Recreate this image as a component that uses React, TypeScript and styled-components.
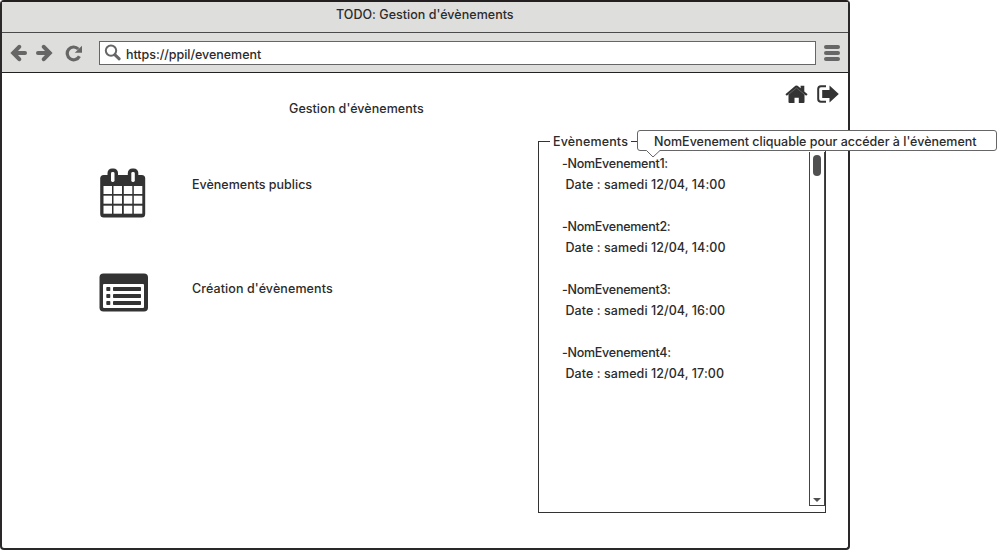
import React from "react";
import styled, { createGlobalStyle } from "styled-components";

const GlobalStyle = createGlobalStyle`
  *, *::before, *::after { box-sizing: border-box; }
  body { margin: 0; background: #fff; overflow: hidden; }
  svg { display: block; flex: none; }
`;

const Screen = styled.div`
  width: 997px;
  height: 550px;
  font: 500 12.5px/21px Inter, "Noto Sans", sans-serif;
  color: #2b2b2b;
`;

const BrowserWindow = styled.div`
  width: 850px;
  height: 550px;
  border: 2px solid #2b2829;
  border-top-color: #231f20;
  border-radius: 4px;
  display: flex;
  flex-direction: column;
`;

const TitleBar = styled.header`
  height: 31px;
  flex: none;
  padding-top: 2px;
  padding-left: 334px;
  background: #dededc;
  border-bottom: 1px solid #4a4a4a;
`;

const Toolbar = styled.div`
  height: 40px;
  flex: none;
  display: flex;
  align-items: center;
  padding: 0 7px 0 8px;
  background: #dededc;
  border-bottom: 1px solid #222;
`;

const NavIcons = styled.div`
  display: grid;
  grid-template-columns: 26px 29px 34px;
`;

const AddressBar = styled.div`
  width: 717px;
  height: 24px;
  display: flex;
  padding: 2px 0 0 4px;
  gap: 4px;
  margin-right: 8px;
  background: #fff;
  border: 1px solid #666;
`;

const Label = styled.span<{ $spacing?: number }>`
  display: block;
  white-space: pre;
  letter-spacing: ${(p) => p.$spacing ?? 0}px;
`;

const Page = styled.main`
  flex: 1;
  display: flex;
  justify-content: space-between;
  padding: 11px 8px 0 97px;
`;

const MainColumn = styled.section`
  padding-top: 14px;
`;

const PageTitle = styled.h1`
  margin: 0 0 49px 190px;
  font: inherit;
`;

const MenuEntry = styled.a`
  display: grid;
  grid-template-columns: 93px auto;
  height: 50px;
  margin-bottom: 54px;
`;

const MenuText = styled.div`
  padding-top: 6px;
`;

const SideColumn = styled.aside`
  width: 303px;
  margin-right: -1px;
`;

const Shortcuts = styled.nav`
  display: flex;
  justify-content: flex-end;
  gap: 9px;
  height: 47px;
  padding: 1px 2px 0 0;
`;

const EventPanel = styled.fieldset`
  position: relative;
  width: 288px;
  height: 382px;
  margin: 0;
  padding: 0;
  min-width: 0;
  border: 1px solid #333;
  display: flex;
  justify-content: space-between;
`;

const PanelTitle = styled.legend`
  margin-left: 11px;
  padding: 0 3px;
  height: 21px;
`;

const EventList = styled.ul`
  list-style: none;
  margin: 0;
  padding: 1px 0 0 23px;
`;

const EventItem = styled.li`
  margin-bottom: 21px;
`;

const EventDate = styled.div`
  padding-left: 3.5px;
`;

const ScrollTrack = styled.div`
  width: 16px;
  height: 354px;
  border: 1px solid #444;
  border-top: 0;
  display: flex;
  flex-direction: column;
  align-items: center;
  justify-content: space-between;
  padding: 3px 0;
`;

const ScrollThumb = styled.div`
  width: 8px;
  height: 21px;
  border-radius: 4px;
  background: #505050;
`;

const Tooltip = styled.div`
  position: absolute;
  left: 98px;
  top: -22px;
  width: 360px;
  height: 21px;
  padding-left: 16px;
  line-height: 21px;
  background: #fff;
  border: 1px solid #666;
  border-radius: 3px;
`;

const TooltipPointer = styled.svg`
  position: absolute;
  left: 8px;
  top: 18px;
`;

const gray = "#666";
const dark = "#333";

const ArrowIcon = ({ flip = false }: { flip?: boolean }) => (
  <svg width="17" height="18" viewBox="0 0 17 18" fill="none" stroke={gray} strokeWidth="4">
    <g transform={flip ? "matrix(-1 0 0 1 17 0)" : undefined}>
      <path d="M9.2 2.8 3.2 9l6 6.2" strokeLinecap="round" strokeLinejoin="miter" />
      <path d="M4 9h11" strokeLinecap="round" />
    </g>
  </svg>
);

const ReloadIcon = () => (
  <svg width="18" height="18" viewBox="0 0 18 18">
    <path d="M14.4 12.2A6.4 6.4 0 1 1 13.3 5" fill="none" stroke={gray} strokeWidth="3.2" />
    <path d="M17 1.7v7.1H9.8z" fill={gray} />
  </svg>
);

const SearchIcon = () => (
  <svg width="18" height="18" viewBox="0 0 18 18" fill="none" stroke={gray}>
    <circle cx="7" cy="6.6" r="5.2" strokeWidth="2" />
    <path d="m11 10.8 4.2 4" strokeWidth="3" strokeLinecap="round" />
  </svg>
);

const MenuIcon = () => (
  <svg width="16" height="16" viewBox="0 0 16 16" fill={gray}>
    <rect width="16" height="4" rx="2" />
    <rect y="6" width="16" height="4" rx="2" />
    <rect y="12" width="16" height="4" rx="2" />
  </svg>
);

const HomeIcon = () => (
  <svg width="23" height="18" viewBox="0 0 23 18" fill={dark}>
    <path d="M3.5 9 11.5 2l8 7v8q0 1-1 1h-4.7v-5.3H9.5V18H4.5q-1 0-1-1z" />
    <path d="M.4 9.2 10.4.8q1.1-.8 2.2 0l3 2.5V.8h3.7v5.6l3.3 2.8-1.4 1.6-9.7-7.6-9.7 7.6z" />
    <path d="M3.3 9.6 11.5 3l8.2 6.6" fill="none" stroke="#888" strokeWidth=".5" />
  </svg>
);

const ExitIcon = () => (
  <svg width="22" height="18" viewBox="0 0 22 18">
    <path d="M9 1.2H4Q1.2 1.2 1.2 4v10q0 2.8 2.8 2.8h5" fill="none" stroke={dark} strokeWidth="2" />
    <path d="M5.2 5h7.3V.5L21.8 9l-9.3 8.5V13H5.2z" fill={dark} />
  </svg>
);

const CalendarIcon = () => (
  <svg width="49" height="50" viewBox="0 0 49 50">
    <rect x="1.2" y="7" width="45" height="42.5" rx="3.5" fill={dark} />
    <rect x="8.5" y="0.5" width="10.5" height="15" rx="4.5" fill={dark} />
    <rect x="28.8" y="0.5" width="10.5" height="15" rx="4.5" fill={dark} />
    <rect x="12" y="4" width="3.5" height="10" rx="1.4" fill="#fff" />
    <rect x="32.3" y="4" width="3.5" height="10" rx="1.4" fill="#fff" />
    {[18, 27.7, 37.7].map((y) =>
      [4.5, 14.5, 24.8, 34.8].map((x) => (
        <rect key={`${x}-${y}`} x={x} y={y} width="8.5" height="8" fill="#fff" />
      ))
    )}
  </svg>
);

const FormIcon = () => (
  <svg width="50" height="40" viewBox="0 0 50 40">
    <rect x=".5" y="1.5" width="48.5" height="38" rx="4" fill={dark} />
    <rect x="4" y="12" width="41" height="24" rx="1" fill="#fff" />
    {[15, 22, 29].map((y) => (
      <g key={y} fill={dark}>
        <rect x="7.3" y={y} width="4" height="4" rx=".8" />
        <rect x="14" y={y} width="28" height="4" rx=".8" />
      </g>
    ))}
  </svg>
);

const events = [
  { name: "-NomEvenement1:", date: "Date : samedi 12/04, 14:00" },
  { name: "-NomEvenement2:", date: "Date : samedi 12/04, 14:00" },
  { name: "-NomEvenement3:", date: "Date : samedi 12/04, 16:00" },
  { name: "-NomEvenement4:", date: "Date : samedi 12/04, 17:00" },
];

export default function App() {
  return (
    <Screen>
      <GlobalStyle />
      <BrowserWindow>
        <TitleBar>
          <Label $spacing={0.03}>TODO: Gestion d'évènements</Label>
        </TitleBar>
        <Toolbar>
          <NavIcons>
            <ArrowIcon />
            <ArrowIcon flip />
            <ReloadIcon />
          </NavIcons>
          <AddressBar>
            <SearchIcon />
            <Label $spacing={-0.04}>https://ppil/evenement</Label>
          </AddressBar>
          <MenuIcon />
        </Toolbar>
        <Page>
          <MainColumn>
            <PageTitle>
              <Label $spacing={0.05}>Gestion d'évènements</Label>
            </PageTitle>
            <MenuEntry>
              <CalendarIcon />
              <MenuText>
                <Label>Evènements publics</Label>
              </MenuText>
            </MenuEntry>
            <MenuEntry>
              <FormIcon />
              <MenuText>
                <Label $spacing={0.1}>Création d'évènements</Label>
              </MenuText>
            </MenuEntry>
          </MainColumn>
          <SideColumn>
            <Shortcuts>
              <HomeIcon />
              <ExitIcon />
            </Shortcuts>
            <EventPanel>
              <PanelTitle>
                <Label $spacing={0.15}>Evènements</Label>
              </PanelTitle>
              <EventList>
                {events.map((event) => (
                  <EventItem key={event.name}>
                    <Label $spacing={-0.26}>{event.name}</Label>
                    <EventDate>
                      <Label $spacing={0.07}>{event.date}</Label>
                    </EventDate>
                  </EventItem>
                ))}
              </EventList>
              <ScrollTrack>
                <ScrollThumb />
                <svg width="8" height="4" viewBox="0 0 8 4">
                  <path d="M0 0h8L4 4z" fill="#505050" />
                </svg>
              </ScrollTrack>
              <Tooltip>
                <Label>NomEvenement cliquable pour accéder à l'évènement</Label>
                <TooltipPointer width="15" height="9" viewBox="0 0 15 9">
                  <path d="M.5 1.5 7 8l7-6.5V0H.5z" fill="#fff" />
                  <path d="M.5 1.5 7 8l7-6.5" fill="none" stroke="#666" />
                </TooltipPointer>
              </Tooltip>
            </EventPanel>
          </SideColumn>
        </Page>
      </BrowserWindow>
    </Screen>
  );
}
